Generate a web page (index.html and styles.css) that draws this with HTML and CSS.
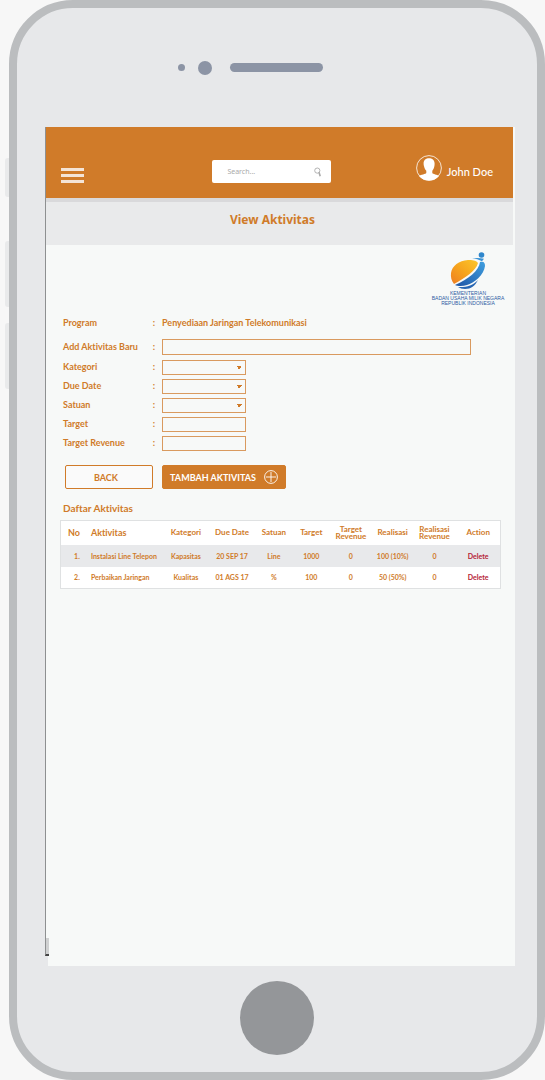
FILE: index.html
```html
<!DOCTYPE html>
<html lang="id">
<head>
<meta charset="utf-8">
<meta name="viewport" content="width=device-width, initial-scale=1">
<title>View Aktivitas</title>
<link rel="stylesheet" href="styles.css">
</head>
<body>
<div class="phone">
  <span class="side-key mute"></span>
  <span class="side-key volume-up"></span>
  <span class="side-key volume-down"></span>
  <div class="phone-top">
    <span class="sensor"></span>
    <span class="camera"></span>
    <span class="speaker"></span>
  </div>
  <div class="screen">
    <header class="topbar">
      <button class="menu" type="button" aria-label="Menu"><span></span><span></span><span></span></button>
      <form class="search">
        <input type="text" placeholder="Search..." aria-label="Search">
        <button type="button" aria-label="Go">
          <svg viewBox="0 0 8 10" width="8" height="10" fill="none" stroke="#aaa"><circle cx="3.3" cy="3.6" r="2.6" stroke-width=".9"/><path d="M5 5.200L6.200 9.300" stroke-width="1.600"/></svg>
        </button>
      </form>
      <div class="user">
        <svg viewBox="0 0 26 26" width="26" height="26"><circle cx="13" cy="13" r="12.4" fill="none" stroke="#fff" stroke-width=".8"/><path d="M7.600 8.500C7.600 5 10 3.300 13 3.300s5.600 1.700 5.600 5.200c0 1.600-.1 2.100-.3 3-.3 2-1.200 3.300-2 4.200v2.300c.6 1.300 4.700 1.400 6.700 3C20.400 24 17 25.600 13 25.600S5.600 24 3 21c2-1.600 6.700-1.700 7.300-3v-2.300c-.9-.9-1.900-2.200-2.200-4.200-.2-.9-.5-1.400-.5-3z" fill="#fff"/></svg>
        <span>John Doe</span>
      </div>
    </header>
    <h1 class="title">View Aktivitas</h1>
    <main class="content">
      <div class="ministry">
        <svg viewBox="0 0 36 38" width="36" height="38">
          <defs>
            <linearGradient id="sun" x1="0" y1="1" x2="1" y2="0"><stop offset="0" stop-color="#ee7d22"/><stop offset=".5" stop-color="#f6a51e"/><stop offset="1" stop-color="#fbc72b"/></linearGradient>
            <linearGradient id="wave" x1="0" y1="1" x2="1" y2="0"><stop offset="0" stop-color="#1f55a5"/><stop offset="1" stop-color="#3f9fdf"/></linearGradient>
          </defs>
          <path d="M1 21C2 14 9 8.500 18 8c5-.3 9 1 10 3-2 8-13 15-24 21C1.500 29 .5 25 1 21z" fill="url(#sun)"/>
          <path d="M5 33C18 27 29 19 30 10c4-1 5 1 5 4-1 9-11 17-18 19 -4 1.300-9 1.500-12 0z" fill="url(#wave)"/>
          <path d="M8 35c8 .5 15-1.500 20-7-3 6-7 9-13 9-3 0-5-.8-7-2z" fill="#2766b3"/>
          <circle cx="31.500" cy="3" r="2.800" fill="#2f87cc"/>
          <path d="M22 6.500c4-.8 8-.7 12 .3l-2 2.500C29 7.500 26 6.800 22 6.500z" fill="#3a93d6"/>
        </svg>
        <p>KEMENTERIAN<br>BADAN USAHA MILIK NEGARA<br>REPUBLIK INDONESIA</p>
      </div>
      <form class="form">
        <div class="row intro"><span class="label">Program<i>:</i></span><span class="value">Penyediaan Jaringan Telekomunikasi</span></div>
        <div class="row first"><label class="label" for="aktivitas">Add Aktivitas Baru<i>:</i></label><input class="field wide" id="aktivitas" type="text"></div>
        <div class="row"><label class="label" for="kategori">Kategori<i>:</i></label><select class="field" id="kategori"><option></option></select></div>
        <div class="row"><label class="label" for="due">Due Date<i>:</i></label><select class="field" id="due"><option></option></select></div>
        <div class="row"><label class="label" for="satuan">Satuan<i>:</i></label><select class="field" id="satuan"><option></option></select></div>
        <div class="row"><label class="label" for="target">Target<i>:</i></label><input class="field" id="target" type="text"></div>
        <div class="row"><label class="label" for="revenue">Target Revenue<i>:</i></label><input class="field" id="revenue" type="text"></div>
        <div class="actions">
          <button class="btn back" type="button">BACK</button>
          <button class="btn add" type="button">TAMBAH AKTIVITAS
            <svg viewBox="0 0 14 14" width="14" height="14" fill="none" stroke="#fff" stroke-width=".9"><circle cx="7" cy="7" r="6.400"/><path d="M7 2v10M2 7h10"/></svg>
          </button>
        </div>
      </form>
      <h2 class="subtitle">Daftar Aktivitas</h2>
      <table class="list">
        <colgroup><col class="c-no"><col class="c-name"><col class="c-cat"><col class="c-wide"><col class="c-unit"><col class="c-target"><col class="c-wide"><col class="c-unit"><col class="c-wide"><col class="c-wide"></colgroup>
        <thead>
          <tr><th class="big">No</th><th class="big name">Aktivitas</th><th>Kategori</th><th>Due Date</th><th>Satuan</th><th>Target</th><th>Target Revenue</th><th>Realisasi</th><th>Realisasi Revenue</th><th>Action</th></tr>
        </thead>
        <tbody>
          <tr><td class="no">1.</td><td class="name">Instalasi Line Telepon</td><td>Kapasitas</td><td>20 SEP 17</td><td>Line</td><td>1000</td><td>0</td><td>100 (10%)</td><td>0</td><td><a href="#">Delete</a></td></tr>
          <tr><td class="no">2.</td><td class="name">Perbaikan Jaringan</td><td>Kualitas</td><td>01 AGS 17</td><td>%</td><td>100</td><td>0</td><td>50 (50%)</td><td>0</td><td><a href="#">Delete</a></td></tr>
        </tbody>
      </table>
    </main>
  </div>
  <div class="phone-bottom"><button class="home" type="button" aria-label="Home"></button></div>
</div>
</body>
</html>
```
FILE: styles.css
```css
* { box-sizing: border-box; }
body {
  margin: 0;
  padding-left: 9px;
  background: #f7f7f7;
  color: #d07b29;
  font-family: Lato, "Open Sans", sans-serif;
  font-size: 9px;
  font-weight: 700;
  font-variant-ligatures: none;
}
button, input, select { font: inherit; color: inherit; }

/* Device frame */
.phone {
  position: relative;
  display: flex;
  flex-direction: column;
  min-height: 100vh;
  border: 8px solid #bbbdbf;
  border-radius: 64px;
  background: #e7e8ea;
}
.side-key {
  position: absolute;
  left: -12px;
  width: 4px;
  height: 66px;
  border-radius: 3px 0 0 3px;
  background: #e9eaeb;
}
.mute { top: 150px; height: 39px; }
.volume-up { top: 233px; }
.volume-down { top: 315px; }
.phone-top {
  display: flex;
  align-items: center;
  justify-content: center;
  height: 119px;
  padding-right: 54px;
}
.sensor, .camera, .speaker { background: #8c94a5; border-radius: 8px; }
.sensor { width: 7px; height: 7px; }
.camera { width: 14px; height: 14px; margin: 0 18px 0 13px; }
.speaker { width: 93px; height: 9px; }
.phone-bottom {
  display: flex;
  justify-content: center;
  padding: 15px 0 17px;
}
.home {
  width: 74px;
  height: 74px;
  border: 0;
  border-radius: 50%;
  background: #949699;
}

/* Application screen */
.screen {
  position: relative;
  flex: 1;
  margin: 0 22px 0 28px;
  border-left: 1px solid #8e9091;
  background: #f7f9f8;
}
.screen::before, .screen::after {
  content: "";
  position: absolute;
  left: -1px;
  width: 3px;
}
.screen::before { bottom: 0; height: 10px; background: #e7e8ea; }
.screen::after {
  bottom: 10px;
  height: 16px;
  border-left: 1px solid #8e9091;
  border-bottom: 2px solid #444;
  background: #cfd0d1;
}
.topbar {
  display: flex;
  align-items: flex-end;
  justify-content: space-between;
  height: 71px;
  margin-right: 2px;
  padding: 0 20px 15px 15px;
  background: #d07b29;
}
.menu {
  display: grid;
  gap: 3px;
  width: 23px;
  padding: 0;
  border: 0;
  background: none;
}
.menu span { height: 3px; background: #f4e4d6; }
.search {
  display: flex;
  align-items: center;
  width: 119px;
  height: 23px;
  margin-left: 44px;
  padding: 0 9px 0 15px;
  border-radius: 2px;
  background: #fff;
}
.search input {
  flex: 1;
  min-width: 0;
  padding: 0;
  border: 0;
  outline: 0;
  background: none;
  font-family: "Noto Sans", sans-serif;
  font-size: 7px;
  font-weight: 400;
}
.search input::placeholder { color: #aaa; }
.search button { display: flex; padding: 0; border: 0; background: none; }
.user {
  display: flex;
  align-items: center;
  gap: 5px;
  padding-bottom: 2px;
  color: #fff;
  font-size: 11px;
  font-weight: 500;
  line-height: 16px;
}
.user span { padding-top: 8px; }
.title {
  height: 47px;
  margin: 0 2px 0 0;
  padding: 10px 14px 0 0;
  border-top: 4px solid #d9d9db;
  background: #e9eaeb;
  font-family: "Noto Sans", "Open Sans", sans-serif;
  font-size: 12px;
  line-height: 16px;
  text-align: center;
}
.content { padding: 7px 14px 16px 14px; }
.ministry {
  display: flex;
  flex-direction: column;
  align-items: center;
  width: 74px;
  margin: 0 -4px 0 auto;
}
.ministry p {
  margin: 1px 0 0;
  color: #2c5ba2;
  font: 400 5px/5px "Liberation Sans", sans-serif;
  text-align: center;
  white-space: nowrap;
}

/* Entry form */
.form { padding: 0 30px 0 3px; }
.row {
  display: grid;
  grid-template-columns: 92px 1fr;
  column-gap: 7px;
  align-items: center;
  margin-bottom: 4px;
}
.intro { margin: 10px 0 8px; }
.first { margin-bottom: 5px; }
.label {
  display: flex;
  justify-content: space-between;
}
.label i { font-style: normal; }
.label, .value { padding-bottom: 1px; line-height: 14px; }
.field {
  width: 84px;
  height: 15px;
  padding: 0 4px;
  border: 1px solid #d99a5f;
  border-radius: 0;
  outline: 0;
  background: transparent;
}
.field.wide { width: 100%; height: 16px; }
select.field {
  appearance: none;
  background: linear-gradient(to bottom left, #d07b29 50%, transparent 50%) right 6px center / 3px 3px no-repeat,
    linear-gradient(to bottom right, #d07b29 50%, transparent 50%) right 3px center / 3px 3px no-repeat;
}
.actions {
  display: flex;
  gap: 9px;
  margin: 14px 0 0 2px;
}
.btn {
  display: flex;
  align-items: center;
  justify-content: center;
  height: 24px;
  padding: 0;
  border: 1px solid #d07b29;
  border-radius: 2px;
}
.back { width: 88px; padding-right: 6px; background: #fafafa; }
.add { width: 124px; gap: 8px; background: #d07b29; color: #fff; }
.subtitle {
  margin: 12px 3px 4px;
  font-size: 10px;
  line-height: 15px;
}

/* Activity list */
.list {
  width: 100%;
  table-layout: fixed;
  border-collapse: collapse;
  border: 1px solid #dfe1e2;
  background: #fff;
  font-size: 7px;
  text-align: center;
}
.c-no { width: 6%; }
.c-name { width: 17%; }
.c-cat { width: 11%; }
.c-wide { width: 10%; }
.c-unit { width: 9%; }
.c-target { width: 8%; }
.list th, .list td { padding: 0; }
.list th { height: 24px; font-size: 8px; line-height: 7px; }
.list .big { font-size: 9px; }
.list td { height: 22px; }
.list .name { padding-left: 4px; text-align: left; white-space: nowrap; }
.list .no { padding-left: 6px; }
.list tbody tr:first-child { background: #e8e9eb; }
.list a { color: #b52335; text-decoration: none; }
```
